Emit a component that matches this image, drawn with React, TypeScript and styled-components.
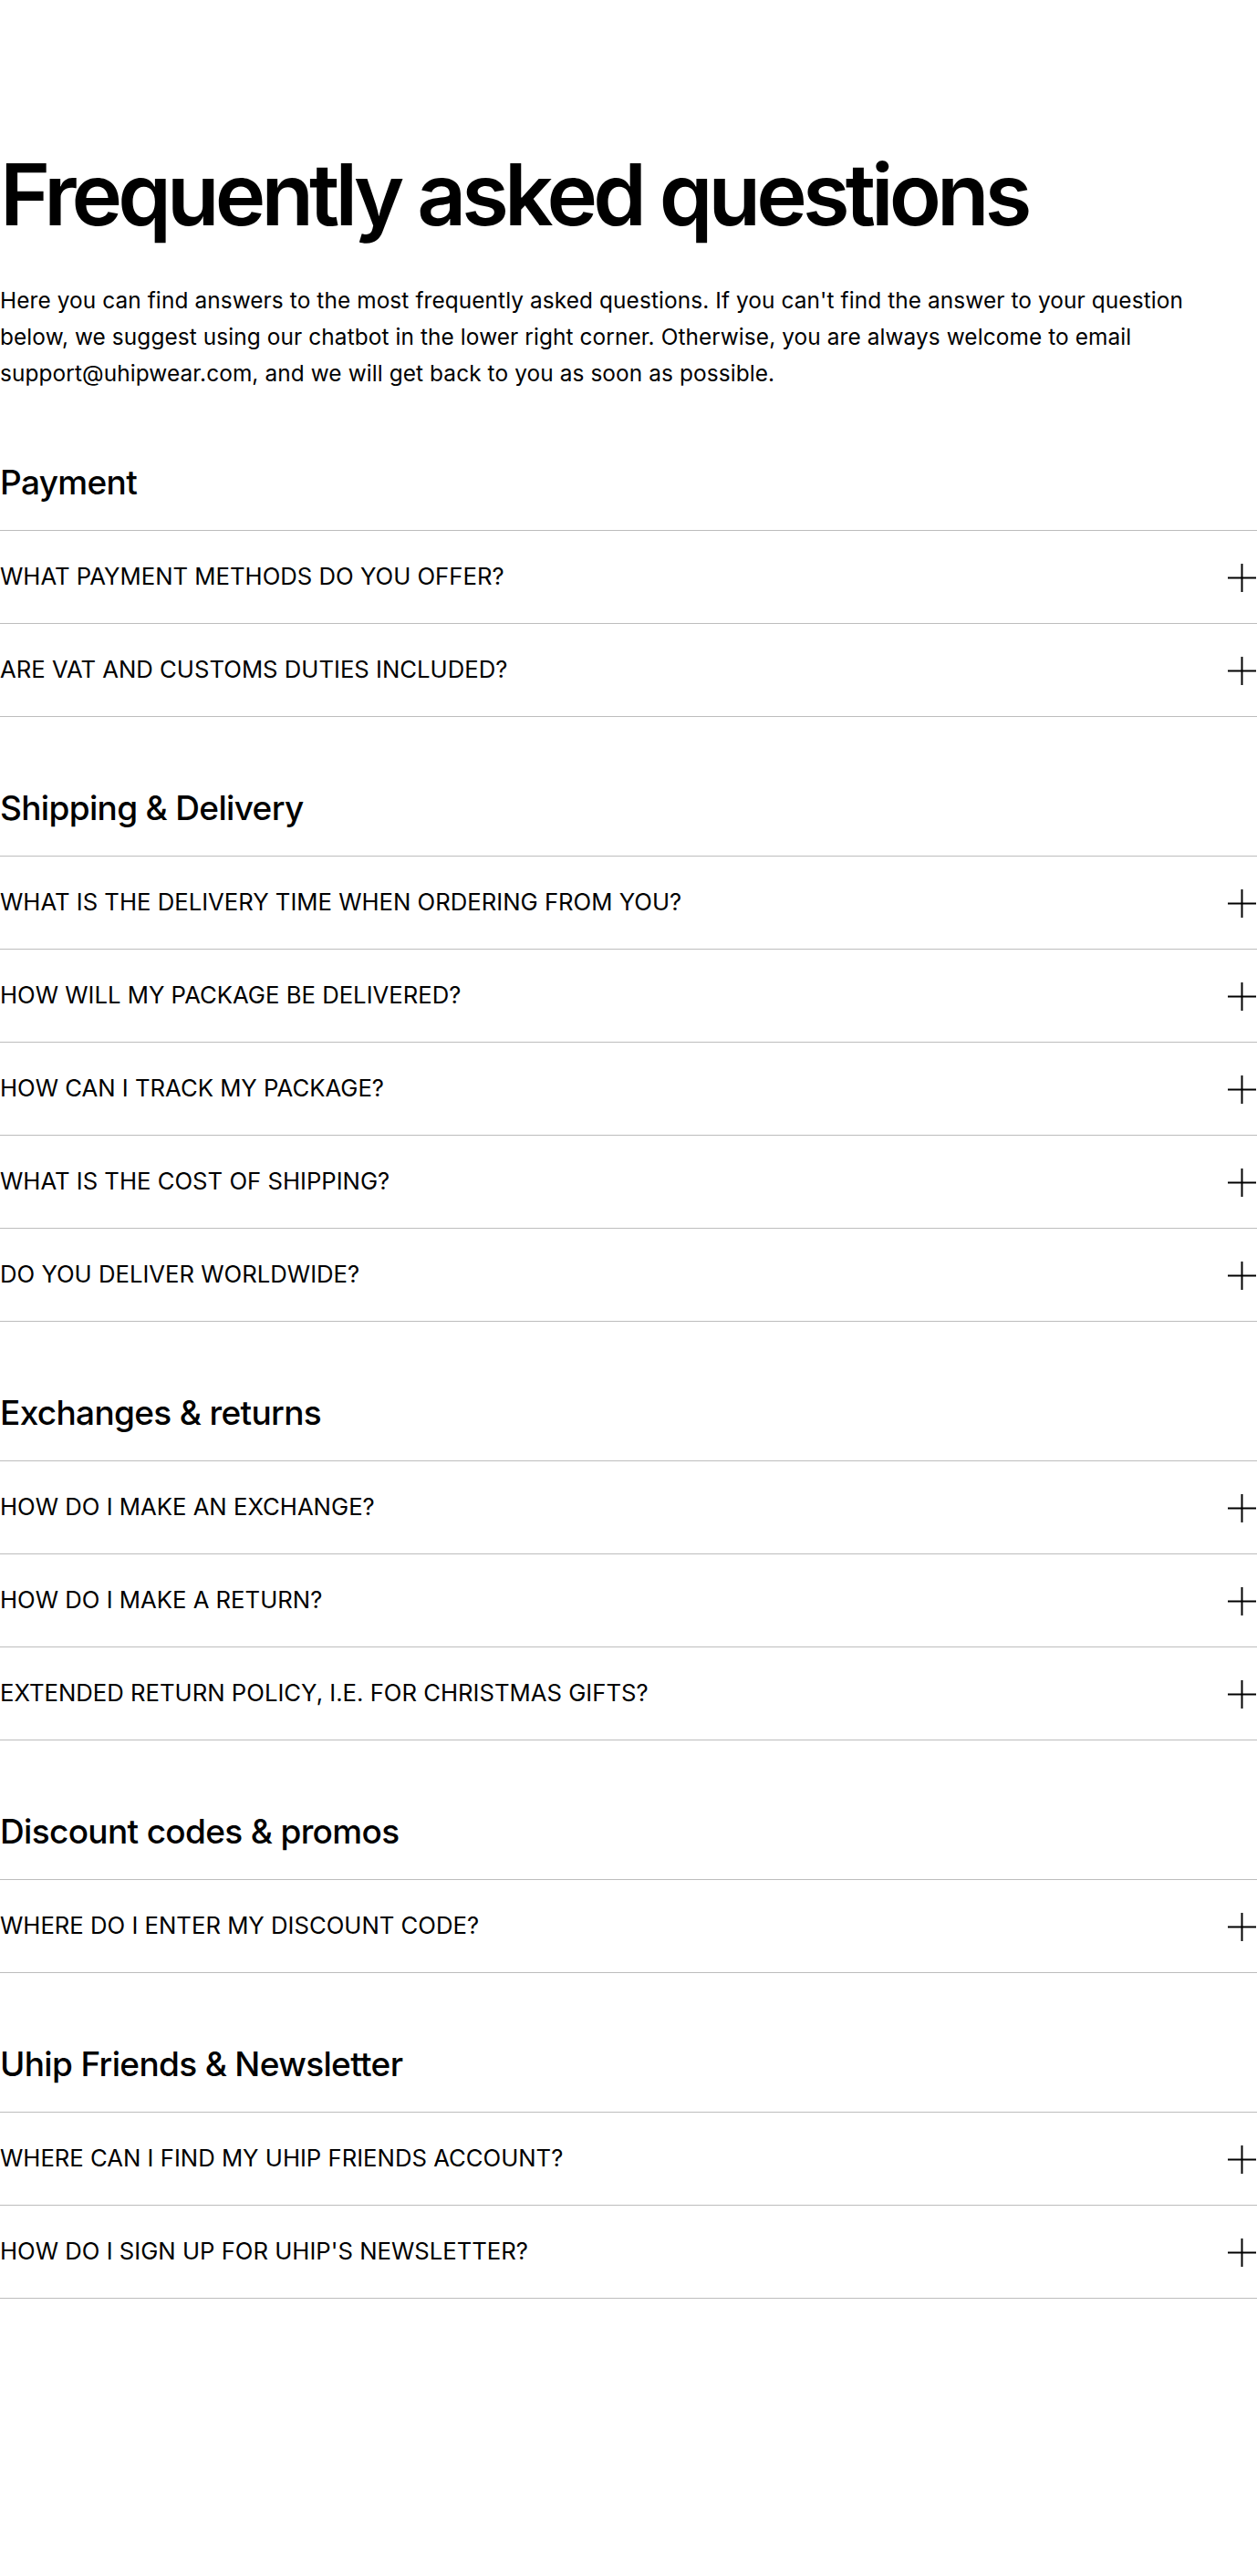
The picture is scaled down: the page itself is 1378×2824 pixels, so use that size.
import React from "react";
import styled, { createGlobalStyle } from "styled-components";

const GlobalStyle = createGlobalStyle`
  html, body {
    margin: 0;
    padding: 0;
    background: #ffffff;
  }
  body {
    font-family: Inter, "Noto Sans", Arial, sans-serif;
    color: #000;
    -webkit-font-smoothing: antialiased;
  }
  * { box-sizing: border-box; }
`;

const Page = styled.main`
  padding: 161px 0 300px;
  width: 1378px;
`;

const Title = styled.h1`
  margin: 0;
  font-size: 94px;
  line-height: 104.5px;
  font-weight: 600;
  letter-spacing: -0.052em;
`;

const Intro = styled.p`
  margin: 43px 0 0;
  max-width: 1310px;
  font-size: 24.4px;
  line-height: 40px;
  font-weight: 400;
  letter-spacing: 0.004em;
`;

const Section = styled.section`
  margin-top: 78px;
`;

const SectionTitle = styled.h2`
  margin: 0 0 30px;
  font-size: 37px;
  line-height: 44px;
  font-weight: 500;
  letter-spacing: -0.018em;
`;

const List = styled.ul`
  list-style: none;
  margin: 0;
  padding: 0;
  border-top: 1px solid #bdbdbd;
`;

const Item = styled.li`
  display: flex;
  align-items: center;
  justify-content: space-between;
  height: 102px;
  border-bottom: 1px solid #bdbdbd;
  font-size: 25.7px;
  font-weight: 400;
  text-transform: uppercase;
  cursor: pointer;
`;

const Question = styled.span`
  line-height: 1.2;
`;

const PlusIcon = styled.svg`
  width: 31px;
  height: 31px;
  flex: none;
  margin: 3px 1px 0 0;
`;

const Plus = () => (
  <PlusIcon viewBox="0 0 31 31" fill="none" stroke="#000" strokeWidth={2}>
    <line x1="0" y1="15.5" x2="31" y2="15.5" />
    <line x1="15.5" y1="0" x2="15.5" y2="31" />
  </PlusIcon>
);

const sections: { title: string; questions: string[] }[] = [
  {
    title: "Payment",
    questions: ["What payment methods do you offer?", "Are VAT and customs duties included?"],
  },
  {
    title: "Shipping & Delivery",
    questions: [
      "What is the delivery time when ordering from you?",
      "How will my package be delivered?",
      "How can I track my package?",
      "What is the cost of shipping?",
      "Do you deliver worldwide?",
    ],
  },
  {
    title: "Exchanges & returns",
    questions: [
      "How do I make an exchange?",
      "How do I make a return?",
      "Extended return policy, i.e. for Christmas gifts?",
    ],
  },
  {
    title: "Discount codes & promos",
    questions: ["Where do I enter my discount code?"],
  },
  {
    title: "Uhip Friends & Newsletter",
    questions: ["Where can I find my Uhip Friends account?", "How do I sign up for Uhip's newsletter?"],
  },
];

export default function App() {
  return (
    <>
      <GlobalStyle />
      <Page>
        <Title>Frequently asked questions</Title>
        <Intro>
          Here you can find answers to the most frequently asked questions. If you can't find the answer to your
          question below, we suggest using our chatbot in the lower right corner. Otherwise, you are always welcome to
          email support@uhipwear.com, and we will get back to you as soon as possible.
        </Intro>
        {sections.map((s) => (
          <Section key={s.title}>
            <SectionTitle>{s.title}</SectionTitle>
            <List>
              {s.questions.map((q) => (
                <Item key={q}>
                  <Question>{q}</Question>
                  <Plus />
                </Item>
              ))}
            </List>
          </Section>
        ))}
      </Page>
    </>
  );
}
